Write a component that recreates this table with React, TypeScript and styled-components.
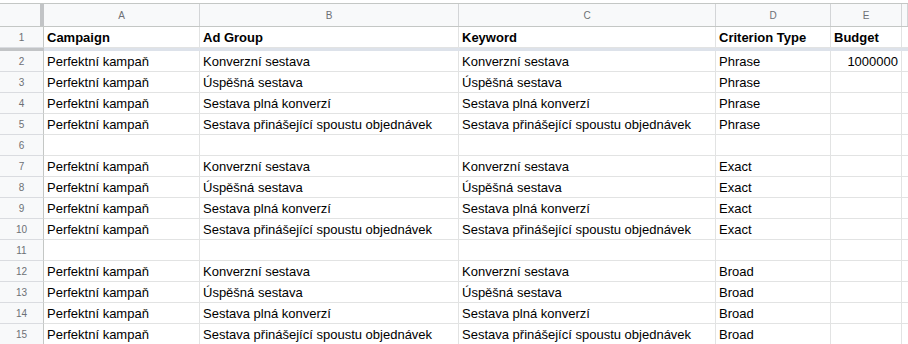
import styled, { createGlobalStyle } from "styled-components";

const GlobalStyle = createGlobalStyle`
  html, body { margin: 0; padding: 0; background: #fff; }
  body { font-family: "Liberation Sans", Arial, sans-serif; }
`;

const COLS = "156px 259px 257px 115px 71px 1fr";

const Sheet = styled.div`
  width: 908px;
  height: 344px;
  overflow: hidden;
  background: #fff;
`;

const TopStrip = styled.div`
  height: 3px;
  background: #fff;
`;

const ColHeaderRow = styled.div`
  display: grid;
  grid-template-columns: 40px 4px ${COLS};
  height: 24px;
  box-sizing: border-box;
  border-top: 1px solid #c4c7c5;
  border-bottom: 1px solid #c4c7c5;
  background: #f8f9fa;
`;

const Corner = styled.div`
  background: #f8f9fa;
`;

const FreezeV = styled.div`
  background: #c2c4c6;
`;

const ColLetter = styled.div`
  display: flex;
  align-items: center;
  justify-content: center;
  box-sizing: border-box;
  border-right: 1px solid #d3d5d7;
  font-size: 10px;
  color: #6d7075;
`;

const Row = styled.div`
  display: grid;
  grid-template-columns: 44px ${COLS};
  height: 21px;
`;

const RowNum = styled.div`
  display: flex;
  align-items: center;
  justify-content: center;
  box-sizing: border-box;
  background: #f8f9fa;
  border-right: 1px solid #c4c7c5;
  border-bottom: 1px solid #dadce0;
  font-size: 10px;
  color: #6d7075;
`;

const Cell = styled.div<{ $bold?: boolean; $right?: boolean }>`
  display: flex;
  align-items: center;
  justify-content: ${(p) => (p.$right ? "flex-end" : "flex-start")};
  box-sizing: border-box;
  padding: 1px 3px 0 3px;
  border-right: 1px solid #e2e3e3;
  border-bottom: 1px solid #e2e3e3;
  font-size: 13px;
  font-weight: ${(p) => (p.$bold ? 700 : 400)};
  color: #000;
  white-space: nowrap;
  overflow: hidden;
`;

const FreezeH = styled.div`
  display: grid;
  grid-template-columns: 44px 1fr;
  height: 3px;
`;

const FreezeHGutter = styled.div`
  background: #c2c4c6;
`;

const FreezeHData = styled.div`
  background: #dde2ea;
`;

const headers = ["Campaign", "Ad Group", "Keyword", "Criterion Type", "Budget"];
const groups = [
  "Konverzní sestava",
  "Úspěšná sestava",
  "Sestava plná konverzí",
  "Sestava přinášející spoustu objednávek",
];
const types = ["Phrase", "Exact", "Broad"];

type RowData = string[] | null;

const rows: RowData[] = [];
types.forEach((t, ti) => {
  groups.forEach((g, gi) => {
    rows.push(["Perfektní kampaň", g, g, t, ti === 0 && gi === 0 ? "1000000" : ""]);
  });
  if (ti < types.length - 1) rows.push(null);
});

function App() {
  return (
    <Sheet>
      <GlobalStyle />
      <TopStrip />
      <ColHeaderRow>
        <Corner />
        <FreezeV />
        {["A", "B", "C", "D", "E", ""].map((l, i) => (
          <ColLetter key={i}>{l}</ColLetter>
        ))}
      </ColHeaderRow>
      <Row>
        <RowNum>1</RowNum>
        {headers.map((h) => (
          <Cell key={h} $bold>{h}</Cell>
        ))}
        <Cell />
      </Row>
      <FreezeH>
        <FreezeHGutter />
        <FreezeHData />
      </FreezeH>
      {rows.map((r, i) => (
        <Row key={i}>
          <RowNum>{i + 2}</RowNum>
          {(r ?? ["", "", "", "", ""]).map((v, j) => (
            <Cell key={j} $right={j === 4}>{v}</Cell>
          ))}
          <Cell />
        </Row>
      ))}
    </Sheet>
  );
}

export default App;
